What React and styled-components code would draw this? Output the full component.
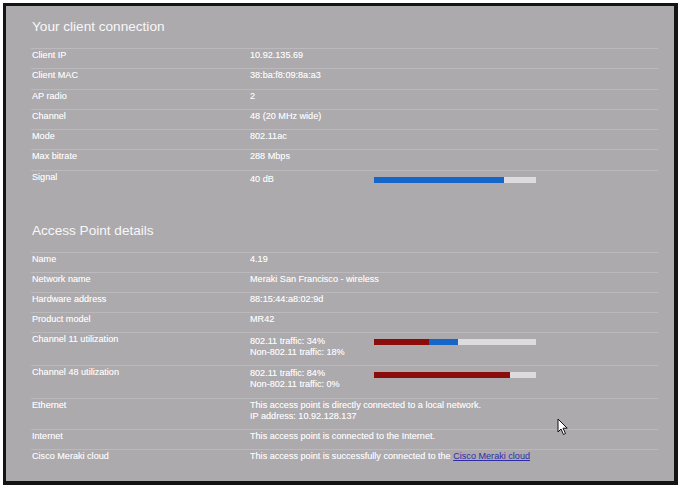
import React from "react";
import styled, { createGlobalStyle } from "styled-components";

const Global = createGlobalStyle`
  html, body { margin: 0; padding: 0; background: #ffffff; }
  body { font-family: "Liberation Sans", Arial, sans-serif; }
`;

const Frame = styled.div`
  position: relative;
  box-sizing: border-box;
  margin: 3px 0 0 3px;
  width: 675px;
  height: 482px;
  border: 3px solid #141414;
  border-right-width: 4px;
  border-bottom-width: 4px;
  background: #adaaae;
  padding: 11px 0 0 25px;
  overflow: hidden;
`;

const Section = styled.section`
  width: 627px;
  margin-top: ${(p) => p.$gap || 0}px;
`;

const Heading = styled.h2`
  margin: 0 0 11px 1px;
  font-weight: 400;
  font-size: 13.6px;
  line-height: 20px;
  color: #f8f8f8;
`;

const Row = styled.div`
  display: grid;
  grid-template-columns: 218px 124px 162px;
  align-items: start;
  border-top: 1px solid #bcb9bc;
  padding: 1px 0 0 1px;
  min-height: ${(p) => p.$h || 18.3}px;
  box-sizing: content-box;
  font-size: 9.1px;
  line-height: 11px;
  color: #fafafa;
  text-shadow: 0 0 0.4px rgba(255, 255, 255, 0.6);
`;

const Label = styled.div``;

const Value = styled.div`
  grid-column: ${(p) => (p.$wide ? "2 / span 2" : "2")};
  padding-top: ${(p) => p.$pt || 0}px;
  white-space: nowrap;
`;

const Bar = styled.div`
  display: flex;
  margin-top: 5px;
  width: 162px;
  height: 6px;
  background: #dcdbdd;
`;

const Seg = styled.div`
  height: 100%;
  background: ${(p) => p.$color};
`;

const Link = styled.a`
  color: #2c2ca6;
  text-decoration: underline;
  text-shadow: none;
`;

const Cursor = styled.svg`
  position: absolute;
  left: 551px;
  top: 412px;
`;

function Meter({ parts }) {
  return (
    <Bar>
      {parts.map(([w, c], i) => (
        <Seg key={i} $color={c} style={{ width: `${w}%` }} />
      ))}
    </Bar>
  );
}

const RED = "#8a0d0b";
const BLUE = "#1566c8";

export default function App() {
  return (
    <>
      <Global />
      <Frame>
        <Section>
          <Heading>Your client connection</Heading>
          <Row><Label>Client IP</Label><Value>10.92.135.69</Value></Row>
          <Row><Label>Client MAC</Label><Value>38:ba:f8:09:8a:a3</Value></Row>
          <Row><Label>AP radio</Label><Value>2</Value></Row>
          <Row><Label>Channel</Label><Value>48 (20 MHz wide)</Value></Row>
          <Row><Label>Mode</Label><Value>802.11ac</Value></Row>
          <Row><Label>Max bitrate</Label><Value>288 Mbps</Value></Row>
          <Row>
            <Label>Signal</Label>
            <Value $pt={2}>40 dB</Value>
            <Meter parts={[[80, BLUE]]} />
          </Row>
        </Section>
        <Section $gap={31}>
          <Heading>Access Point details</Heading>
          <Row $h={18}><Label>Name</Label><Value>4.19</Value></Row>
          <Row $h={18}><Label>Network name</Label><Value $wide>Meraki San Francisco - wireless</Value></Row>
          <Row $h={18}><Label>Hardware address</Label><Value>88:15:44:a8:02:9d</Value></Row>
          <Row $h={18}><Label>Product model</Label><Value>MR42</Value></Row>
          <Row $h={31}>
            <Label>Channel 11 utilization</Label>
            <Value $pt={2}>802.11 traffic: 34%<br />Non-802.11 traffic: 18%</Value>
            <Meter parts={[[34, RED], [18, BLUE]]} />
          </Row>
          <Row $h={31}>
            <Label>Channel 48 utilization</Label>
            <Value $pt={1}>802.11 traffic: 84%<br />Non-802.11 traffic: 0%</Value>
            <Meter parts={[[84, RED]]} />
          </Row>
          <Row $h={29}>
            <Label>Ethernet</Label>
            <Value $wide>This access point is directly connected to a local network.<br />IP address: 10.92.128.137</Value>
          </Row>
          <Row $h={18}><Label>Internet</Label><Value $wide>This access point is connected to the Internet.</Value></Row>
          <Row $h={18}>
            <Label>Cisco Meraki cloud</Label>
            <Value $wide>This access point is successfully connected to the <Link href="#">Cisco Meraki cloud</Link></Value>
          </Row>
        </Section>
        <Cursor width="12" height="18" viewBox="0 0 12 18">
          <path d="M1 1 L1 14 L4 11 L6.5 16.5 L8.5 15.5 L6 10.2 L10.2 10.2 Z" fill="#ffffff" stroke="#111" strokeWidth="1" strokeLinejoin="round" />
        </Cursor>
      </Frame>
    </>
  );
}
